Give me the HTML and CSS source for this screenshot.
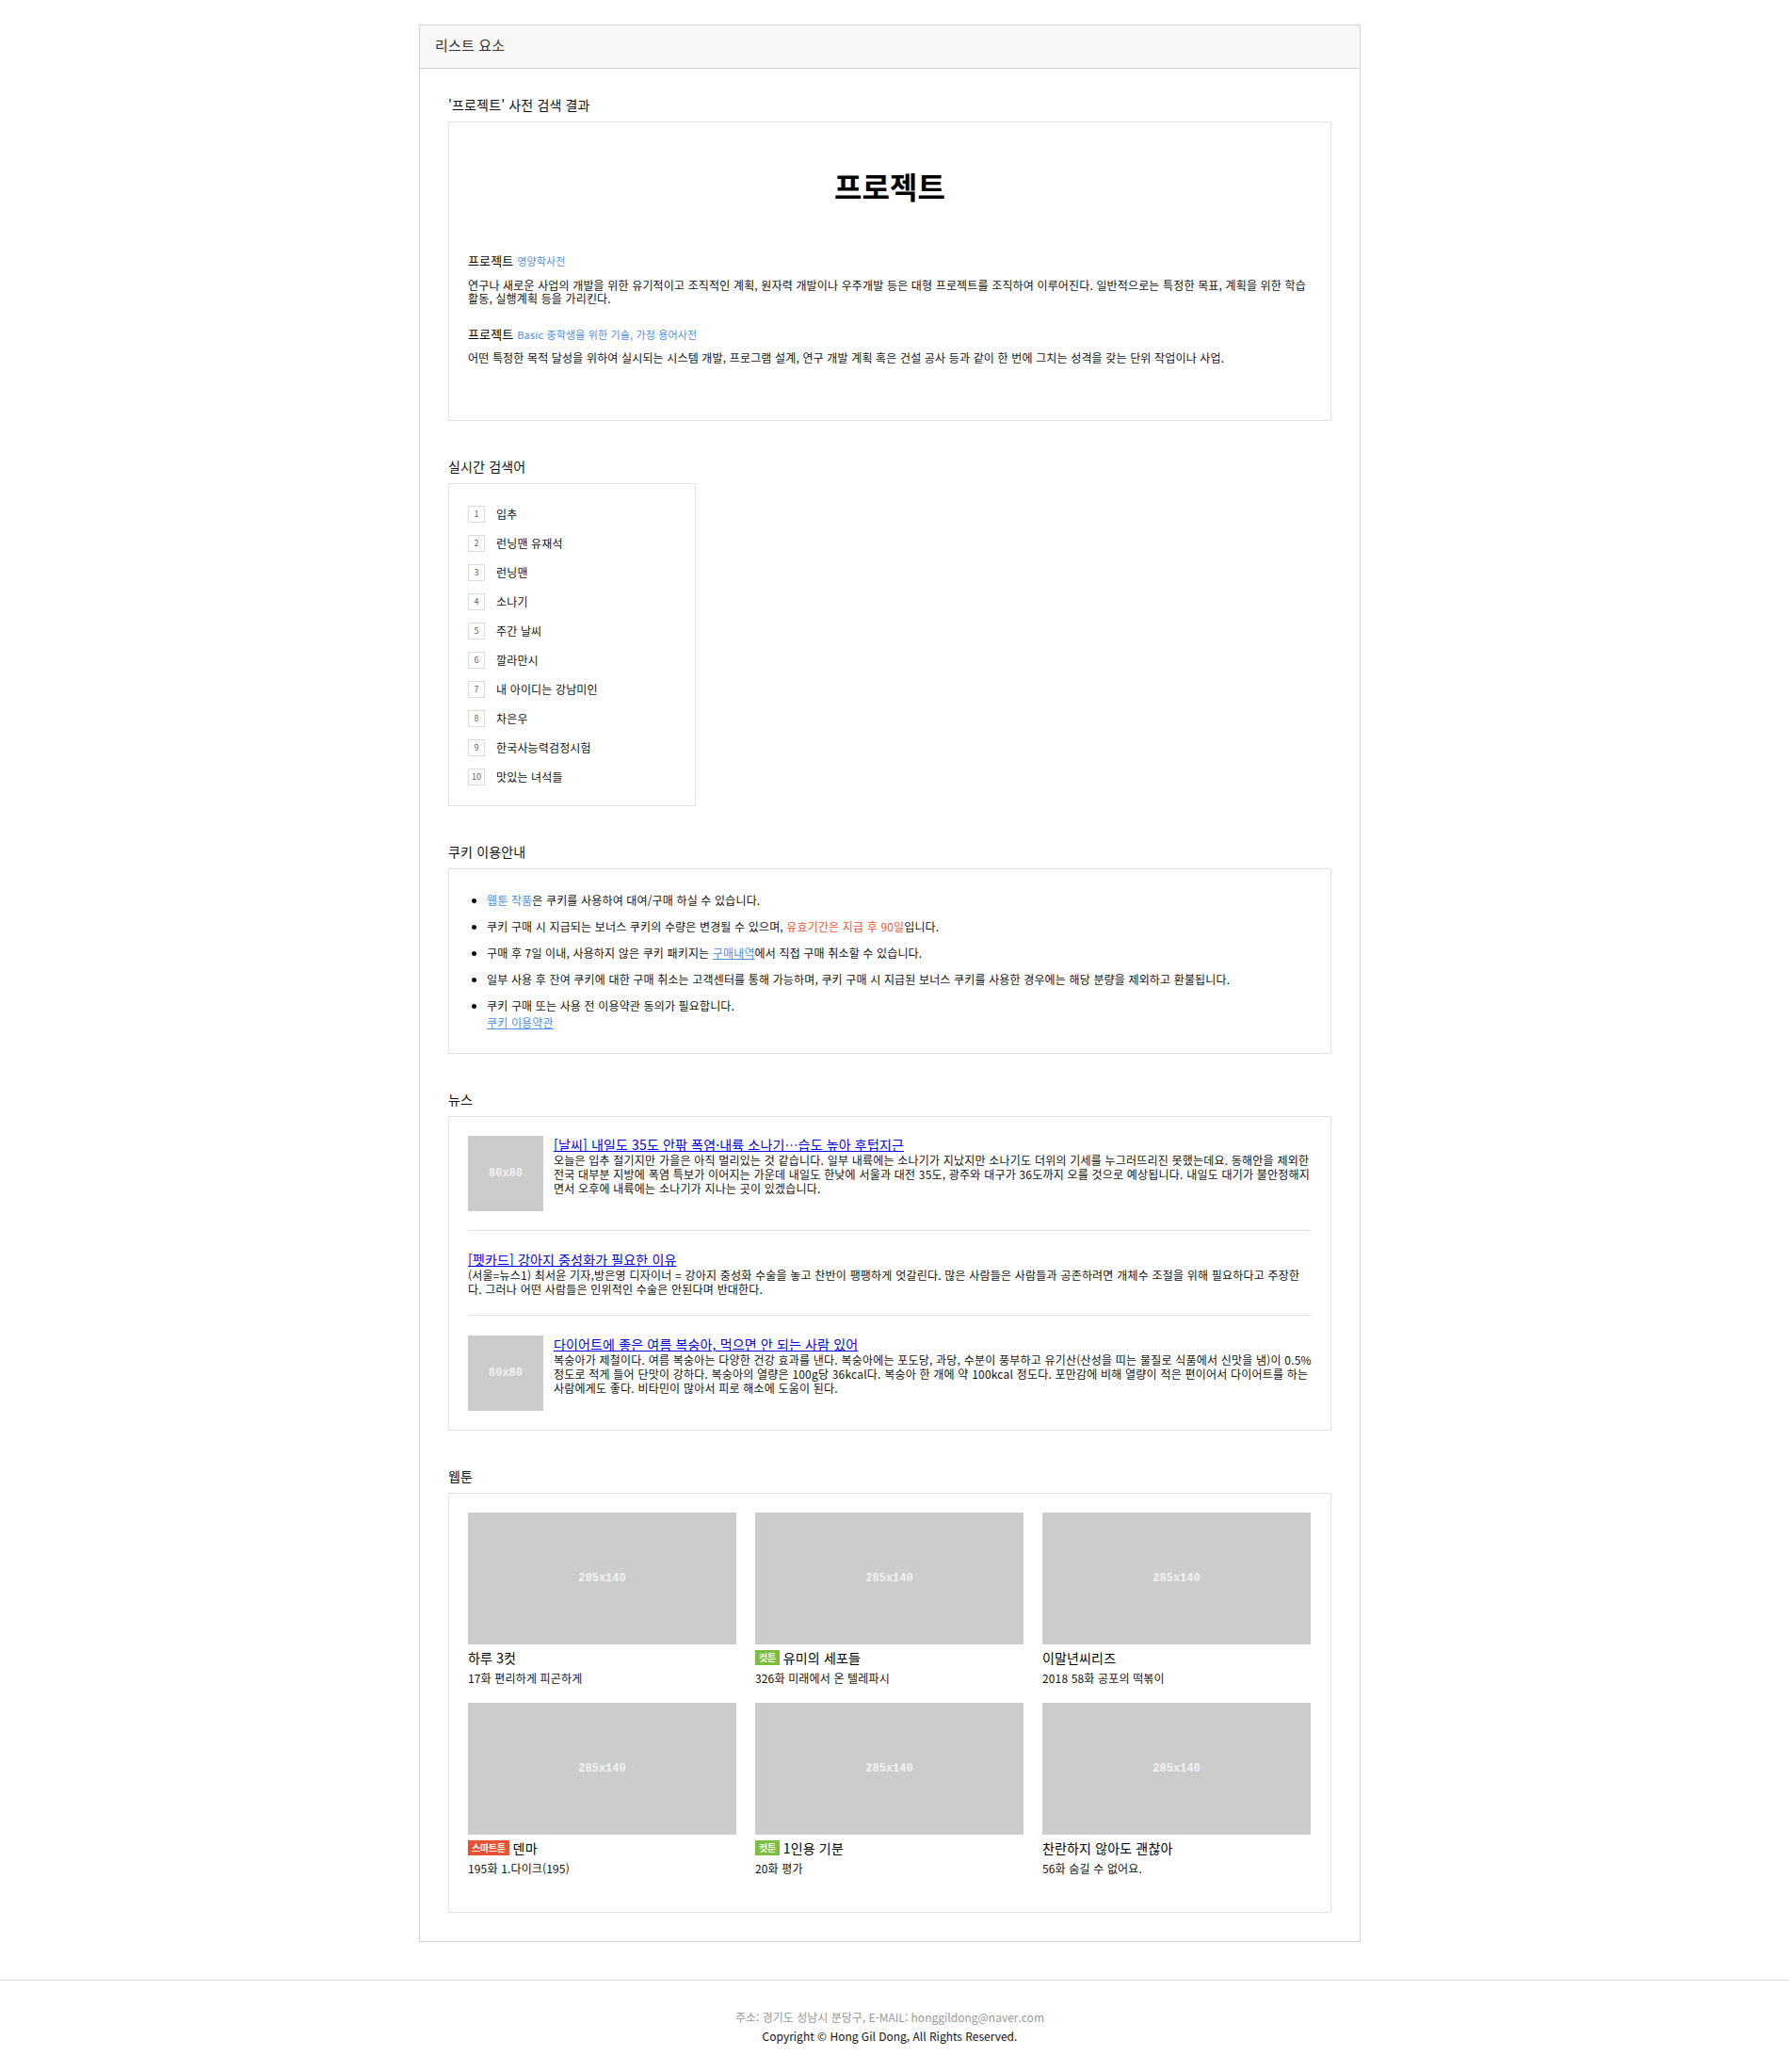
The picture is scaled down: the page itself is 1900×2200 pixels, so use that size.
FILE: index.html
```html
<!DOCTYPE html>
<html lang="ko">
<head>
<meta charset="utf-8">
<title>리스트 요소</title>
<link rel="stylesheet" href="styles.css">
</head>
<body>
<div class="main">
  <div class="panel">
    <div class="panel-head">리스트 요소</div>
    <div class="panel-body">

      <section class="sec">
        <h2 class="sec-title">'프로젝트' 사전 검색 결과</h2>
        <div class="box dict">
          <h1 class="dict-word">프로젝트</h1>
          <div class="dict-entry first">
            <div class="dict-head">프로젝트 <span class="blue">영양학사전</span></div>
            <p class="dict-desc">연구나 새로운 사업의 개발을 위한 유기적이고 조직적인 계획, 원자력 개발이나 우주개발 등은 대형 프로젝트를 조직하여 이루어진다. 일반적으로는 특정한 목표, 계획을 위한 학습 활동, 실행계획 등을 가리킨다.</p>
          </div>
          <div class="dict-entry">
            <div class="dict-head">프로젝트 <span class="blue">Basic 중학생을 위한 기술, 가정 용어사전</span></div>
            <p class="dict-desc">어떤 특정한 목적 달성을 위하여 실시되는 시스템 개발, 프로그램 설계, 연구 개발 계획 혹은 건설 공사 등과 같이 한 번에 그치는 성격을 갖는 단위 작업이나 사업.</p>
          </div>
        </div>
      </section>

      <section class="sec">
        <h2 class="sec-title">실시간 검색어</h2>
        <ol class="box rank">
          <li><span class="num">1</span><span class="kw">입추</span></li>
          <li><span class="num">2</span><span class="kw">런닝맨 유재석</span></li>
          <li><span class="num">3</span><span class="kw">런닝맨</span></li>
          <li><span class="num">4</span><span class="kw">소나기</span></li>
          <li><span class="num">5</span><span class="kw">주간 날씨</span></li>
          <li><span class="num">6</span><span class="kw">깔라만시</span></li>
          <li><span class="num">7</span><span class="kw">내 아이디는 강남미인</span></li>
          <li><span class="num">8</span><span class="kw">차은우</span></li>
          <li><span class="num">9</span><span class="kw">한국사능력검정시험</span></li>
          <li><span class="num">10</span><span class="kw">맛있는 녀석들</span></li>
        </ol>
      </section>

      <section class="sec">
        <h2 class="sec-title">쿠키 이용안내</h2>
        <div class="box cookie">
          <ul class="cookie-list">
            <li><span class="blue">웹툰 작품</span>은 쿠키를 사용하여 대여/구매 하실 수 있습니다.</li>
            <li>쿠키 구매 시 지급되는 보너스 쿠키의 수량은 변경될 수 있으며, <span class="red">유효기간은 지급 후 90일</span>입니다.</li>
            <li>구매 후 7일 이내, 사용하지 않은 쿠키 패키지는 <a class="blue ul" href="#">구매내역</a>에서 직접 구매 취소할 수 있습니다.</li>
            <li>일부 사용 후 잔여 쿠키에 대한 구매 취소는 고객센터를 통해 가능하며, 쿠키 구매 시 지급된 보너스 쿠키를 사용한 경우에는 해당 분량을 제외하고 환불됩니다.</li>
            <li>쿠키 구매 또는 사용 전 이용약관 동의가 필요합니다.
              <a class="blue ul terms" href="#">쿠키 이용약관</a>
            </li>
          </ul>
        </div>
      </section>

      <section class="sec">
        <h2 class="sec-title">뉴스</h2>
        <div class="box news">
          <div class="news-item">
            <div class="thumb">80x80</div>
            <div class="news-text">
              <a class="news-title" href="#">[날씨] 내일도 35도 안팎 폭염·내륙 소나기…습도 높아 후텁지근</a>
              <p class="news-desc">오늘은 입추 절기지만 가을은 아직 멀리있는 것 같습니다. 일부 내륙에는 소나기가 지났지만 소나기도 더위의 기세를 누그러뜨리진 못했는데요. 동해안을 제외한 전국 대부분 지방에 폭염 특보가 이어지는 가운데 내일도 한낮에 서울과 대전 35도, 광주와 대구가 36도까지 오를 것으로 예상됩니다. 내일도 대기가 불안정해지면서 오후에 내륙에는 소나기가 지나는 곳이 있겠습니다.</p>
            </div>
          </div>
          <div class="news-item">
            <div class="news-text">
              <a class="news-title" href="#">[펫카드] 강아지 중성화가 필요한 이유</a>
              <p class="news-desc">(서울=뉴스1) 최서윤 기자,방은영 디자이너 = 강아지 중성화 수술을 놓고 찬반이 팽팽하게 엇갈린다. 많은 사람들은 사람들과 공존하려면 개체수 조절을 위해 필요하다고 주장한다. 그러나 어떤 사람들은 인위적인 수술은 안된다며 반대한다.</p>
            </div>
          </div>
          <div class="news-item">
            <div class="thumb">80x80</div>
            <div class="news-text">
              <a class="news-title" href="#">다이어트에 좋은 여름 복숭아, 먹으면 안 되는 사람 있어</a>
              <p class="news-desc">복숭아가 제철이다. 여름 복숭아는 다양한 건강 효과를 낸다. 복숭아에는 포도당, 과당, 수분이 풍부하고 유기산(산성을 띠는 물질로 식품에서 신맛을 냄)이 0.5% 정도로 적게 들어 단맛이 강하다. 복숭아의 열량은 100g당 36kcal다. 복숭아 한 개에 약 100kcal 정도다. 포만감에 비해 열량이 적은 편이어서 다이어트를 하는 사람에게도 좋다. 비타민이 많아서 피로 해소에 도움이 된다.</p>
            </div>
          </div>
        </div>
      </section>

      <section class="sec">
        <h2 class="sec-title">웹툰</h2>
        <div class="box toon">
          <div class="toon-grid">
            <div class="toon-card">
              <div class="toon-img">285x140</div>
              <div class="toon-title">하루 3컷</div>
              <div class="toon-sub">17화 편리하게 피곤하게</div>
            </div>
            <div class="toon-card">
              <div class="toon-img">285x140</div>
              <div class="toon-title"><span class="badge green">컷툰</span>유미의 세포들</div>
              <div class="toon-sub">326화 미래에서 온 텔레파시</div>
            </div>
            <div class="toon-card">
              <div class="toon-img">285x140</div>
              <div class="toon-title">이말년씨리즈</div>
              <div class="toon-sub">2018 58화 공포의 떡볶이</div>
            </div>
            <div class="toon-card">
              <div class="toon-img">285x140</div>
              <div class="toon-title"><span class="badge red-bg">스마트툰</span>덴마</div>
              <div class="toon-sub">195화 1.다이크(195)</div>
            </div>
            <div class="toon-card">
              <div class="toon-img">285x140</div>
              <div class="toon-title"><span class="badge green">컷툰</span>1인용 기분</div>
              <div class="toon-sub">20화 평가</div>
            </div>
            <div class="toon-card">
              <div class="toon-img">285x140</div>
              <div class="toon-title">찬란하지 않아도 괜찮아</div>
              <div class="toon-sub">56화 숨길 수 없어요.</div>
            </div>
          </div>
        </div>
      </section>

    </div>
  </div>
</div>
<footer class="footer">
  <p class="addr">주소: 경기도 성남시 분당구, E-MAIL: honggildong@naver.com</p>
  <p class="copy">Copyright © Hong Gil Dong, All Rights Reserved.</p>
</footer>
</body>
</html>
```

FILE: styles.css
```css
* { box-sizing: border-box; }

html, body {
  margin: 0;
  padding: 0;
  background: #fff;
}

body {
  font-family: "Noto Sans CJK KR", "Noto Sans", sans-serif;
  font-size: 12px;
  color: #111;
  letter-spacing: 0.0125em;
  word-spacing: 0;
}

.main {
  padding: 26px 10px 0 0;
}

.panel {
  width: 1000px;
  margin: 0 auto;
  border: 1px solid #d4d4d4;
}

.panel-head {
  height: 46px;
  line-height: 42px;
  padding: 0 16px;
  background: #f7f7f7;
  border-bottom: 1px solid #d4d4d4;
  font-size: 15px;
  color: #333;
}

.panel-body {
  padding: 30px;
}

.sec + .sec {
  margin-top: 40px;
}

.sec-title {
  margin: 0 0 10px;
  font-size: 14px;
  line-height: 16px;
  font-weight: normal;
  color: #111;
}

.box {
  border: 1px solid #e3e3e3;
  padding: 20px;
  margin: 0;
}

.blue { color: #4a8fe8; text-decoration: none; }
.red { color: #f0563a; }
.ul { text-decoration: underline; }

/* dictionary */
.dict {
  padding: 20px 20px 59px;
}

.dict-word {
  margin: 30px 0 0;
  font-size: 32px;
  line-height: 34px;
  font-weight: bold;
  text-align: center;
  color: #000;
  letter-spacing: 0;
}

.dict-entry.first { margin-top: 54px; }
.dict-entry { margin-top: 22px; }

.dict-head {
  font-size: 13px;
  line-height: 17px;
  color: #000;
}

.dict-head .blue {
  font-size: 11px;
  line-height: 1;
}

.dict-desc {
  margin: 11px 0 0;
  line-height: 14px;
}

.dict-entry + .dict-entry .dict-desc { margin-top: 10px; }

/* ranking */
.rank {
  width: 263px;
  list-style: none;
  padding: 23px 20px 21px;
}

.rank li {
  display: flex;
  align-items: center;
  height: 18px;
  margin-bottom: 13px;
}

.rank li:last-child { margin-bottom: 0; }

.num {
  flex: 0 0 18px;
  width: 18px;
  height: 18px;
  border: 1px solid #dcdcdc;
  font-size: 9px;
  line-height: 16px;
  text-align: center;
  color: #666;
  letter-spacing: 0;
}

.kw {
  margin-left: 12px;
  font-size: 12px;
  line-height: 18px;
  color: #111;
}

/* cookie */
.cookie {
  padding: 24px 20px 24px;
}

.cookie-list {
  margin: 0;
  padding-left: 20px;
}

.cookie-list li {
  line-height: 17px;
  margin-bottom: 11px;
}

.cookie-list li:last-child { margin-bottom: 0; }

.terms {
  display: block;
  margin-top: 1px;
}

/* news */
.news-item {
  display: flex;
  gap: 11px;
  padding: 21px 0 20px;
  border-top: 1px solid #e3e3e3;
}

.news-item:first-child {
  border-top: 0;
  padding-top: 0;
}

.news-item:last-child { padding-bottom: 0; }

.thumb {
  flex: 0 0 80px;
  width: 80px;
  height: 80px;
  background: #ccc;
  color: #f2f2f2;
  font-family: "Liberation Mono", monospace;
  font-size: 12px;
  font-weight: bold;
  letter-spacing: 0;
  word-spacing: 0;
  display: flex;
  align-items: center;
  justify-content: center;
}

.news-text { flex: 1; min-width: 0; }

.news-title {
  display: block;
  font-size: 14px;
  line-height: 18px;
  color: #0000ee;
  text-decoration: underline;
}

.news-desc {
  margin: 0;
  line-height: 15px;
  color: #111;
  letter-spacing: 0.017em;
}

/* webtoon */
.toon {
  padding: 20px 20px 39px;
}

.toon-grid {
  display: grid;
  grid-template-columns: repeat(3, 285px);
  column-gap: 20px;
  row-gap: 19px;
}

.toon-img {
  height: 140px;
  background: #ccc;
  color: #f2f2f2;
  font-family: "Liberation Mono", monospace;
  font-size: 12px;
  font-weight: bold;
  letter-spacing: 0;
  word-spacing: 0;
  display: flex;
  align-items: center;
  justify-content: center;
}

.toon-title {
  margin-top: 5px;
  font-size: 14px;
  line-height: 18px;
  color: #000;
  display: flex;
  align-items: center;
}

.toon-sub {
  margin-top: 5px;
  font-size: 12px;
  line-height: 15px;
  color: #111;
}

.badge {
  display: inline-block;
  height: 16px;
  line-height: 16px;
  padding: 0 4px;
  margin-right: 4px;
  font-size: 10px;
  font-weight: bold;
  color: #fff;
  letter-spacing: -0.03em;
}

.badge.green { background: #7cbf3f; }
.badge.red-bg { background: #ea5134; }

/* footer */
.footer {
  margin-top: 40px;
  border-top: 1px solid #d9d9d9;
  padding: 29px 10px 28px 0;
  text-align: center;
  font-size: 12px;
  line-height: 20px;
  letter-spacing: 0;
  word-spacing: 0;
}

.footer p { margin: 0; }
.addr { color: #999; }
.copy { color: #111; }
```
